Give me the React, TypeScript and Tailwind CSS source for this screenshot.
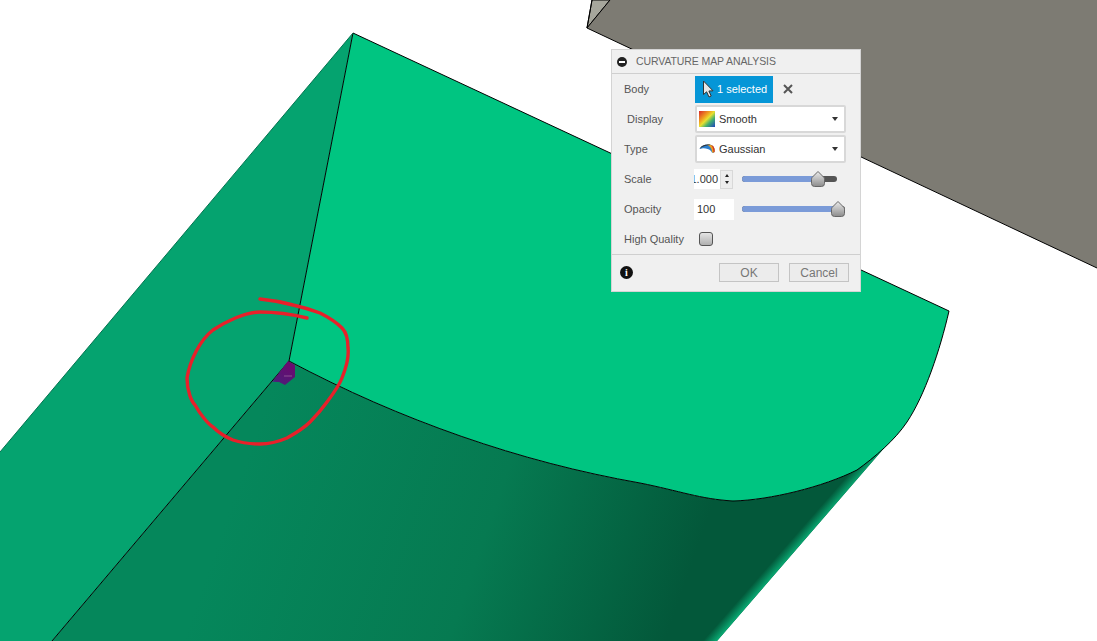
import React from 'react';

const Scene = () => (
  <svg className="absolute inset-0" width="1097" height="641" viewBox="0 0 1097 641">
    <defs>
      <linearGradient id="under" gradientUnits="userSpaceOnUse" x1="260" y1="420" x2="690" y2="570">
        <stop offset="0" stopColor="#05875b" />
        <stop offset="0.55" stopColor="#067a51" />
        <stop offset="1" stopColor="#03583a" />
      </linearGradient>
      <linearGradient id="sliver" gradientUnits="userSpaceOnUse" x1="709" y1="634" x2="717" y2="641">
        <stop offset="0" stopColor="#03583a" />
        <stop offset="1" stopColor="#09ab74" />
      </linearGradient>
      <linearGradient id="stain" gradientUnits="userSpaceOnUse" x1="288" y1="365" x2="275" y2="388">
        <stop offset="0" stopColor="#6a0a70" />
        <stop offset="0.75" stopColor="#4f1c78" />
        <stop offset="1" stopColor="#1f7d80" />
      </linearGradient>
    </defs>

    {/* grey body, top right */}
    <polygon points="592,0 610,0 587,28" fill="#a6a69c" stroke="#000" strokeWidth="1" />
    <polygon points="610,0 1097,0 1097,268 587,28" fill="#7d7b73" />
    <path d="M592,0 L587,28 L1097,268 M587,28 L610,0" fill="none" stroke="#000" strokeWidth="1" />

    {/* left face */}
    <polygon points="353,33 289,361 52,641 0,641 0,452" fill="#05a36f" />

    {/* underside */}
    <path d="M289,361 C400,420 520,462 640,483 C680,491 700,499 733,501 C770,500 823,487 857,470 L885,447 L717,641 L52,641 Z" fill="url(#under)" />
    <polygon points="702,641 717,641 885,447 868,445" fill="url(#sliver)" />

    {/* top face */}
    <path d="M353,33 L949,311 C940,350 925,395 907,422 C895,440 875,457 857,470 C823,487 770,500 733,501 C700,499 680,491 640,483 C520,462 400,420 289,361 Z" fill="#00c581" />
    <path d="M353,33 L949,311 C940,350 925,395 907,422 C895,440 875,457 857,470 C823,487 770,500 733,501 C700,499 680,491 640,483 C520,462 400,420 289,361 L353,33 M289,361 L52,641" fill="none" stroke="#000" strokeWidth="1" />
    <path d="M353,33 L0,452" fill="none" stroke="#04734f" strokeWidth="1" />

    {/* curvature spot */}
    <polygon points="288,361 295,365 295,377 285,385 279,382 272,382" fill="url(#stain)" />
    <path d="M284,376 L292,376" stroke="#a06aa0" strokeWidth="0.7" />

    {/* red scribble */}
    <path
      d="M307,318 C295,315 275,312 260,312 C245,312 225,322 213,330 C200,340 190,360 187,378 C187,392 192,402 195,405 C200,414 208,424 213,427 C220,434 228,438 233,440 C242,443 250,444 260,444 C270,444 280,441 287,438 C296,433 305,427 310,422 C316,416 322,409 327,402 C333,394 339,386 342,378 C346,368 349,356 348,348 C348,340 346,332 342,328 C336,322 328,317 320,313 C312,310 302,307 293,305 C282,302 270,300 260,299"
      fill="none"
      stroke="#e8202a"
      strokeWidth="3.4"
      strokeLinecap="round"
      strokeLinejoin="round"
    />
  </svg>
);

const Caret = () => <span className="ml-auto mr-[6px] h-0 w-0 border-x-[3px] border-t-[4px] border-x-transparent border-t-[#333]" />;

const Thumb = () => (
  <svg width="15" height="17" viewBox="0 0 15 17" className="absolute top-1/2 -translate-x-1/2 -translate-y-1/2">
    <defs>
      <linearGradient id="thumb" x1="0" y1="0" x2="0" y2="1">
        <stop offset="0" stopColor="#ececec" />
        <stop offset="1" stopColor="#8c8c8c" />
      </linearGradient>
    </defs>
    <path d="M7.5,1 L13.5,7 Q14,8 14,9 V13 Q14,16 11,16 H4 Q1,16 1,13 V9 Q1,8 1.5,7 Z" fill="url(#thumb)" stroke="#666" strokeWidth="1" />
  </svg>
);

const Slider = ({ width, fill }: { width: string; fill: string }) => (
  <div className={`relative h-[6px] rounded-full bg-[#555] ${width}`}>
    <div className={`h-full rounded-full bg-[#7b9bd8] ${fill}`} />
    <div className="absolute inset-y-0 left-0 w-full">
      <div className={`relative h-full ${fill}`}>
        <span className="absolute inset-y-0 right-0 flex items-center">
          <Thumb />
        </span>
      </div>
    </div>
  </div>
);

const Row = ({ label, labelClass = 'pl-[12px]', children }: { label: string; labelClass?: string; children: React.ReactNode }) => (
  <div className="flex h-[30px] items-center">
    <span className={`w-[83px] shrink-0 whitespace-nowrap ${labelClass}`}>{label}</span>
    {children}
  </div>
);

const Dialog = () => (
  <div className="absolute left-[611px] top-[49px] flex h-[243px] w-[250px] flex-col border border-[#d4d4d4] bg-[#f0f0f0] text-[11px] text-[#555] font-['Liberation_Sans',Arial,sans-serif]">
    <div className="flex h-[24px] shrink-0 items-center border-b border-[#cfcfcf] pl-[5px]">
      <span className="flex h-[10px] w-[10px] items-center justify-center rounded-full bg-[#222]">
        <span className="h-[2px] w-[6px] bg-white" />
      </span>
      <span className="ml-[9px] text-[10.5px] tracking-[-0.1px] text-[#666]">CURVATURE MAP ANALYSIS</span>
    </div>

    <div className="flex flex-col">
      <Row label="Body">
        <button className="flex h-[27px] w-[78px] items-center bg-[#0696d7] pl-[7px] text-[11px] text-white">
          <svg width="12" height="18" viewBox="0 0 12 18">
            <path d="M1.5,1 V14.5 L4.6,11.8 L7,17 L9.2,16 L6.9,11 L11,10.8 Z" fill="#e8e8e8" stroke="#333" strokeWidth="1" />
          </svg>
          <span className="ml-[3px]">1 selected</span>
        </button>
        <svg width="10" height="10" viewBox="0 0 10 10" className="ml-[10px]">
          <path d="M1,1 L9,9 M9,1 L1,9" stroke="#555" strokeWidth="2" />
        </svg>
      </Row>
      <Row label="Display" labelClass="pl-[15px]">
        <div className="flex h-[28px] w-[151px] items-center rounded-[2px] border-2 border-[#d8d8d8] bg-white pl-[2px] text-[#333]">
          <svg width="16" height="16" viewBox="0 0 16 16">
            <defs>
              <linearGradient id="rainbow" x1="0" y1="0" x2="1" y2="1">
                <stop offset="0" stopColor="#d8262a" />
                <stop offset="0.35" stopColor="#f0a020" />
                <stop offset="0.5" stopColor="#e8e030" />
                <stop offset="0.7" stopColor="#40b070" />
                <stop offset="1" stopColor="#2040c0" />
              </linearGradient>
            </defs>
            <rect width="16" height="16" fill="url(#rainbow)" />
          </svg>
          <span className="ml-[4px]">Smooth</span>
          <Caret />
        </div>
      </Row>
      <Row label="Type">
        <div className="flex h-[28px] w-[151px] items-center rounded-[2px] border-2 border-[#d8d8d8] bg-white pl-[2px] text-[#333]">
          <svg width="16" height="16" viewBox="0 0 16 16">
            <path d="M0.5,8 C3,3.5 8,3 12,4 C15,5 16,8 15.5,11 C14,12.5 13,12 12,10 C10,8 6,7 3,7.5 Z" fill="#2a7fd0" />
            <path d="M8,3.6 C10,3.4 11,3.6 12,4 C15,5 16,8 15.5,11 C14.5,11.8 13.5,12 13,11 C13,8 11,5.5 8,3.6 Z" fill="#e8a020" />
            <path d="M12,4 C15,5 16,8 15.5,11 L14.5,11.4 C14.5,8 13.5,5.5 12,4 Z" fill="#d83020" />
            <path d="M0.5,8 C3,3.5 8,3 12,4 C8,4 4,5 0.5,8 Z" fill="#333" />
          </svg>
          <span className="ml-[4px]">Gaussian</span>
          <Caret />
        </div>
      </Row>
      <Row label="Scale">
        <div className="-ml-[1px] flex h-[20px] items-center">
          <div className="flex h-full w-[26px] items-center justify-end overflow-hidden bg-white pr-[2px] text-[#333]">1.000</div>
          <div className="flex h-[19px] w-[13px] flex-col items-center justify-around border border-[#d8d8d8] bg-[#ededed] py-[2px]">
            <span className="h-0 w-0 border-x-[2.5px] border-b-[3px] border-x-transparent border-b-[#222]" />
            <span className="h-0 w-0 border-x-[2.5px] border-t-[3px] border-x-transparent border-t-[#222]" />
          </div>
        </div>
        <div className="ml-[9px]">
          <Slider width="w-[95px]" fill="w-[80%]" />
        </div>
      </Row>
      <Row label="Opacity">
        <div className="-ml-[1px] flex h-[21px] w-[40px] items-center bg-white pl-[3px] text-[#333]">100</div>
        <div className="ml-[8px]">
          <Slider width="w-[103px]" fill="w-[93%]" />
        </div>
      </Row>
      <Row label="High Quality">
        <span className="ml-[4px] h-[14px] w-[14px] rounded-[3px] border border-[#555] bg-gradient-to-b from-[#e4e4e4] to-[#b0b0b0]" />
      </Row>
    </div>

    <div className="mt-auto flex h-[37px] shrink-0 items-center border-t border-[#cfcfcf] pb-[1px] pl-[8px] pr-[11px]">
      <span className="flex h-[13px] w-[13px] items-center justify-center rounded-full bg-[#111] text-[10px] font-bold leading-none text-white font-['Liberation_Serif',serif]">i</span>
      <button className="ml-auto h-[19px] w-[60px] border border-[#c4c4c4] bg-[#ececec] text-[12px] text-[#777]">OK</button>
      <button className="ml-[10px] h-[19px] w-[60px] border border-[#c4c4c4] bg-[#ececec] text-[12px] text-[#777]">Cancel</button>
    </div>
  </div>
);

export default function App() {
  return (
    <div className="relative h-[641px] w-[1097px] overflow-hidden bg-white">
      <Scene />
      <Dialog />
    </div>
  );
}
